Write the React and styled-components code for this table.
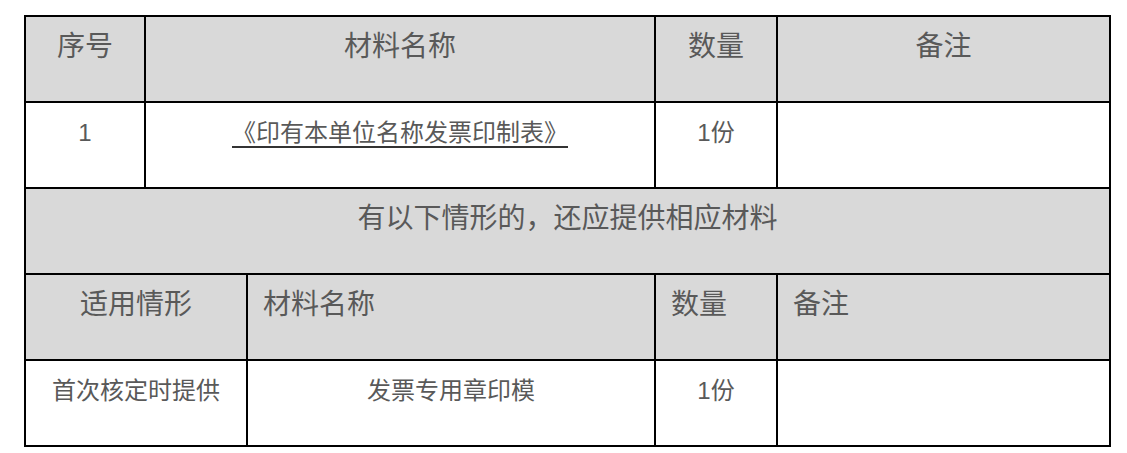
import React from "react";
import styled, { createGlobalStyle } from "styled-components";

const GlobalStyle = createGlobalStyle`
  html, body { margin: 0; padding: 0; background: #ffffff; }
  body { font-family: "Liberation Sans", "Noto Sans CJK SC", sans-serif; }
`;

const Page = styled.div`
  padding: 15px 0 0 24px;
`;

const Table = styled.table`
  border-collapse: collapse;
  table-layout: fixed;
  width: 1085px;
  border: 2px solid #000;
`;

const Row = styled.tr`
  height: 86px;
`;

const Cell = styled.td`
  box-sizing: border-box;
  border: 2px solid #000;
  vertical-align: top;
  padding: ${(p) => (p.$head ? "9px 15px 0" : "11px 15px 0")};
  background: ${(p) => (p.$head ? "#d9d9d9" : "#ffffff")};
  color: #595959;
  font-size: ${(p) => (p.$head ? "28px" : "24px")};
  line-height: ${(p) => (p.$head ? "42px" : "38px")};
  text-align: ${(p) => (p.$left ? "left" : "center")};
  white-space: nowrap;
`;

const Underlined = styled.span`
  text-decoration: underline;
  text-decoration-color: #333;
  text-decoration-thickness: 2px;
  text-underline-offset: 5px;
`;

export default function App() {
  return (
    <>
      <GlobalStyle />
      <Page>
        <Table>
          <colgroup>
            <col style={{ width: 120 }} />
            <col style={{ width: 102 }} />
            <col style={{ width: 408 }} />
            <col style={{ width: 122 }} />
            <col style={{ width: 333 }} />
          </colgroup>
          <tbody>
            <Row>
              <Cell $head>序号</Cell>
              <Cell $head colSpan={2}>材料名称</Cell>
              <Cell $head>数量</Cell>
              <Cell $head>备注</Cell>
            </Row>
            <Row>
              <Cell>1</Cell>
              <Cell colSpan={2}>
                <Underlined>《印有本单位名称发票印制表》</Underlined>
              </Cell>
              <Cell>1份</Cell>
              <Cell></Cell>
            </Row>
            <Row>
              <Cell $head colSpan={5}>有以下情形的，还应提供相应材料</Cell>
            </Row>
            <Row>
              <Cell $head colSpan={2}>适用情形</Cell>
              <Cell $head $left>材料名称</Cell>
              <Cell $head $left>数量</Cell>
              <Cell $head $left>备注</Cell>
            </Row>
            <Row>
              <Cell colSpan={2}>首次核定时提供</Cell>
              <Cell>发票专用章印模</Cell>
              <Cell>1份</Cell>
              <Cell></Cell>
            </Row>
          </tbody>
        </Table>
      </Page>
    </>
  );
}
